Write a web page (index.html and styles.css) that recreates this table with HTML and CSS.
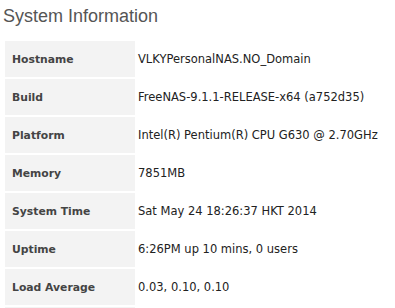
FILE: index.html
```html
<!DOCTYPE html>
<html lang="en">
<head>
    <meta charset="UTF-8">
    <title>System Information</title>
    <link rel="stylesheet" href="styles.css">
</head>
<body>
    <h1 class="page-title">System Information</h1>
    <table class="info-table">
        <tr><th>Hostname</th><td>VLKYPersonalNAS.NO_Domain</td></tr>
        <tr><th>Build</th><td>FreeNAS-9.1.1-RELEASE-x64 (a752d35)</td></tr>
        <tr><th>Platform</th><td>Intel(R) Pentium(R) CPU G630 @ 2.70GHz</td></tr>
        <tr><th>Memory</th><td>7851MB</td></tr>
        <tr><th>System Time</th><td>Sat May 24 18:26:37 HKT 2014</td></tr>
        <tr><th>Uptime</th><td>6:26PM up 10 mins, 0 users</td></tr>
        <tr><th>Load Average</th><td>0.03, 0.10, 0.10</td></tr>
        <tr><th>&nbsp;</th><td>&nbsp;</td></tr>
    </table>
</body>
</html>
```

FILE: styles.css
```css
* {
    margin: 0;
    padding: 0;
    box-sizing: border-box;
}

body {
    background-color: #fff;
    padding: 5px 3px;
    overflow: hidden;
}

.page-title {
    font-family: 'Liberation Sans', Arial, sans-serif;
    font-size: 18px;
    font-weight: normal;
    color: #555;
    line-height: 22px;
}

.info-table {
    margin-top: 12px;
    border-collapse: separate;
    border-spacing: 2px;
    font-family: 'DejaVu Sans', Verdana, sans-serif;
    font-size: 11px;
}

.info-table th {
    width: 130px;
    height: 36px;
    padding-left: 7px;
    text-align: left;
    background-color: #f3f3f3;
    color: #444;
    font-weight: bold;
    font-size: 10.8px;
}

.info-table td {
    padding-left: 1px;
    color: #222;
    font-size: 11.5px;
    white-space: nowrap;
}
```
